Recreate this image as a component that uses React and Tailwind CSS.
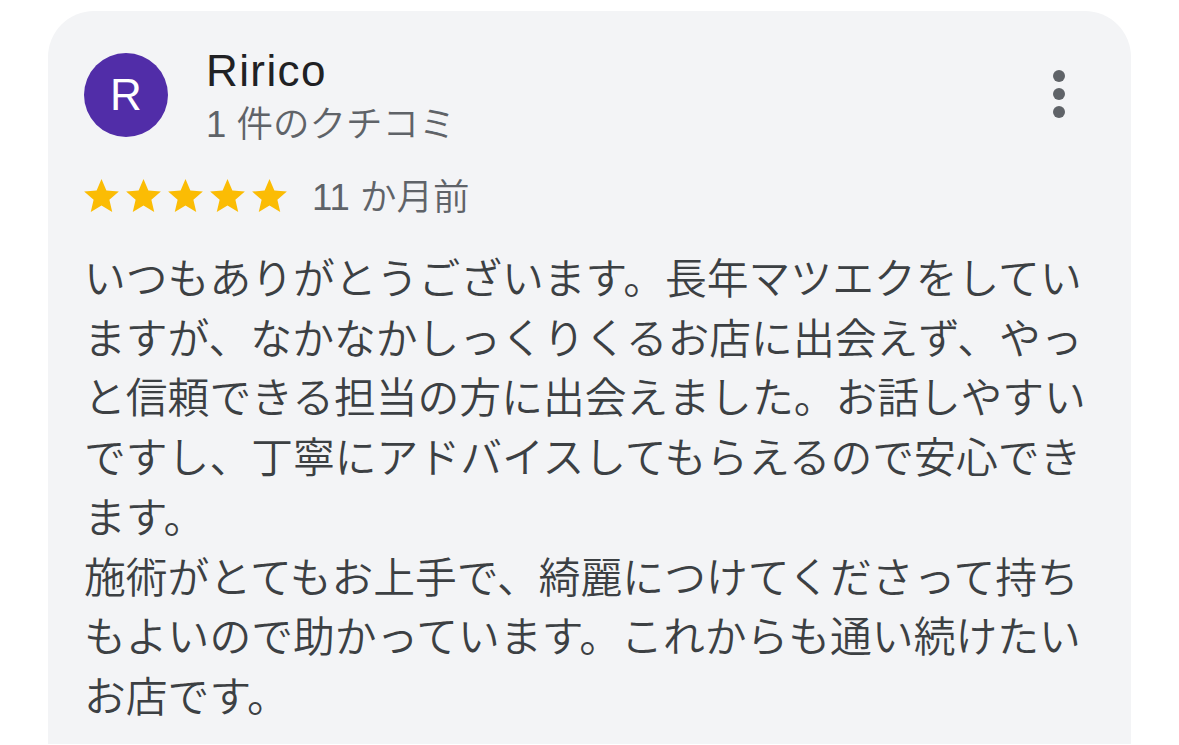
import React from "react";

const FONT = { fontFamily: "'Liberation Sans', Arial, 'Noto Sans CJK JP', sans-serif" };

function Star() {
  return (
    <svg width="35" height="33" viewBox="2 2 20 19" className="shrink-0">
      <path
        d="M12 17.27L18.18 21l-1.64-7.03L22 9.24l-7.19-.61L12 2 9.19 8.63 2 9.24l5.46 4.73L5.82 21z"
        fill="#fbbc04"
      />
    </svg>
  );
}

export default function App() {
  return (
    <div className="bg-white min-h-[745px] w-[1179px] pl-[48px] pt-[11px] overflow-hidden" style={FONT}>
      <div className="bg-[#f3f4f6] rounded-t-[46px] w-[1083px] h-[733px] pl-[36px] pr-[40px] pt-[34px]">
        <div className="flex items-start">
          <div className="mt-[8px] w-[84px] h-[84px] rounded-full bg-[#512da8] flex items-center justify-center shrink-0">
            <span className="text-white text-[44px] leading-none">R</span>
          </div>
          <div className="ml-[38px] flex flex-col">
            <div className="text-[44px] leading-[52px] tracking-[1.4px] text-[#202124]">Ririco</div>
            <div className="mt-[6px] text-[36.5px] leading-[44px] font-[350] text-[#5f6368]">1 件のクチコミ</div>
          </div>
          <div className="ml-auto mr-[26px] mt-[25px] flex flex-col gap-[6px]">
            <span className="block w-[12px] h-[12px] rounded-full bg-[#5f6368]" />
            <span className="block w-[12px] h-[12px] rounded-full bg-[#5f6368]" />
            <span className="block w-[12px] h-[12px] rounded-full bg-[#5f6368]" />
          </div>
        </div>
        <div className="mt-[29px] flex items-center h-[44px]">
          <div className="flex gap-[7px] -mt-[6px]">
            <Star />
            <Star />
            <Star />
            <Star />
            <Star />
          </div>
          <span className="ml-[25px] text-[36.5px] leading-[44px] font-[350] text-[#5f6368]">11 か月前</span>
        </div>
        <p className="mt-[30px] text-[41.8px] leading-[59.7px] font-[350] text-[#3c4043]">
          いつもありがとうございます。長年マツエクをしていますが、なかなかしっくりくるお店に出会えず、やっと信頼できる担当の方に出会えました。お話しやすいですし、丁寧にアドバイスしてもらえるので安心できます。
          <br />
          施術がとてもお上手で、綺麗につけてくださって持ちもよいので助かっています。これからも通い続けたいお店です。
        </p>
      </div>
    </div>
  );
}
